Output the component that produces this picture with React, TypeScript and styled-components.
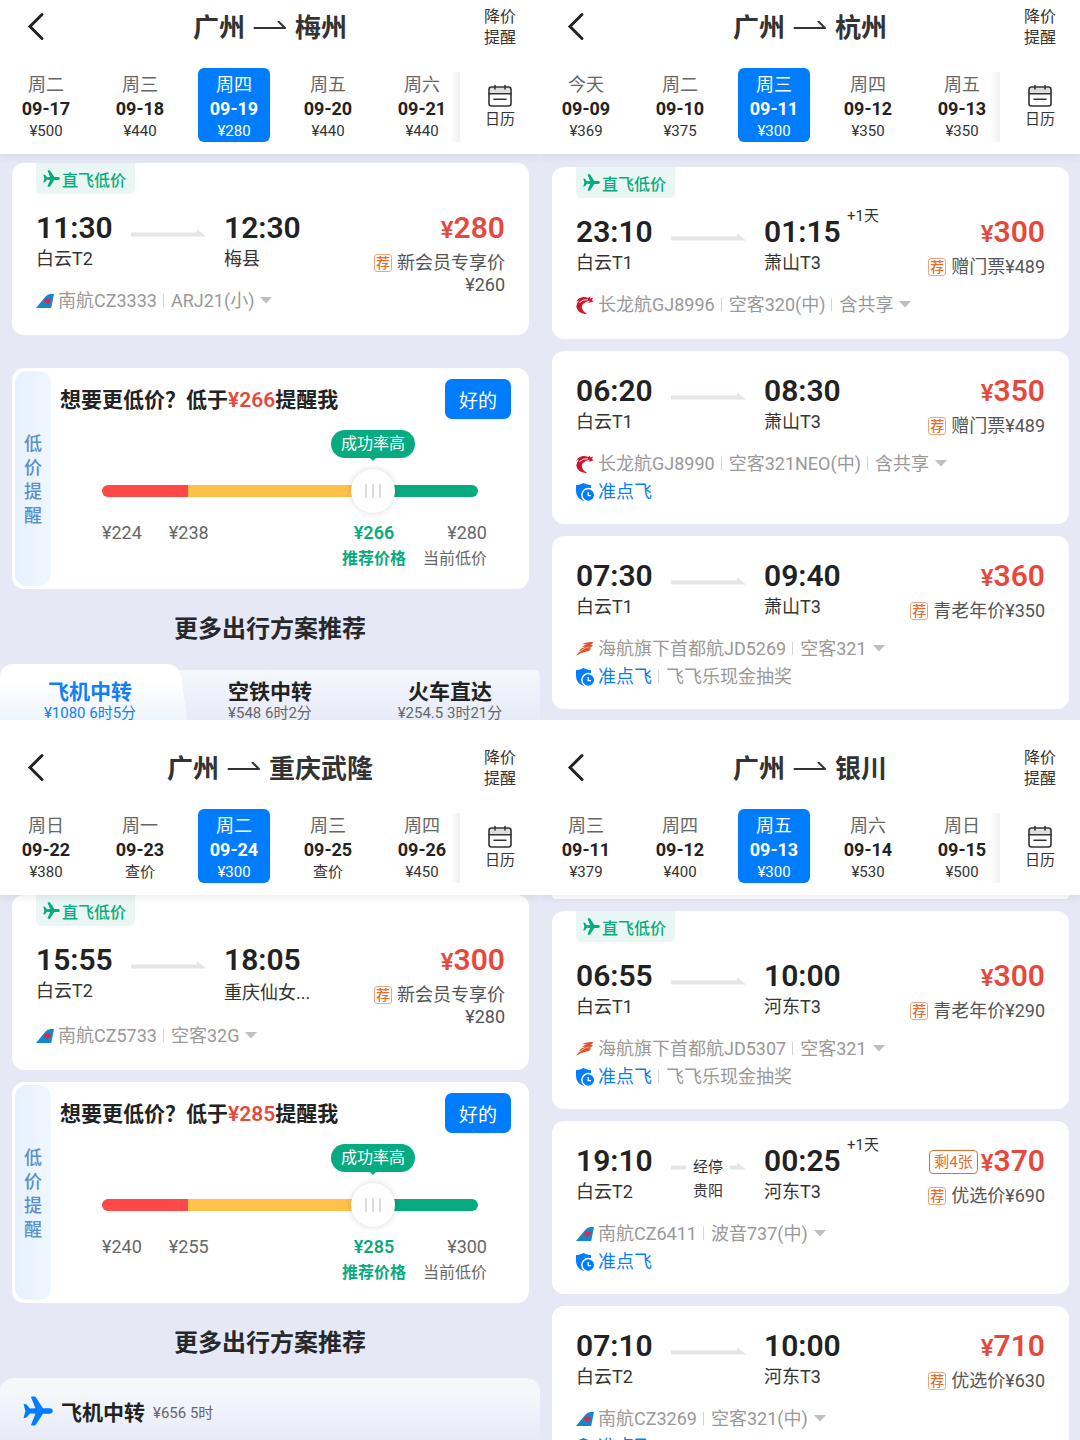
import React, { useState } from "react";
import styled, { createGlobalStyle, css } from "styled-components";

/* ---------- data ---------- */

type Carrier = "southern" | "loong" | "capital";

interface Day {
  week: string;
  date: string;
  price: string;
}

interface Flight {
  direct?: boolean;
  depart: string;
  from: string;
  arrive: string;
  to: string;
  longName?: boolean;
  nextDay?: boolean;
  via?: string;
  left?: string;
  price: string;
  offer: string;
  offerPrice: string;
  offerWraps?: boolean;
  carrier: Carrier;
  details: string[];
  services?: string[];
}

interface Alert {
  min: number;
  low: number;
  target: number;
  current: number;
}

const days = (rows: string[]): Day[] =>
  rows.map((row) => {
    const [week, date, price] = row.split(" ");
    return { week, date, price };
  });

/* ---------- base ---------- */

const BLUE = "#007dff";
const GREEN = "#07ab7f";
const RED = "#e6493c";
const ORANGE = "#e0702f";

const GlobalStyle = createGlobalStyle`
  *, *::before, *::after { box-sizing: border-box; }
  body {
    margin: 0;
    background: #e6e9f5;
    color: #222;
    font-family: Roboto, "Noto Sans CJK SC", sans-serif;
  }
  button {
    margin: 0;
    padding: 0;
    border: 0;
    background: none;
    color: inherit;
    font: inherit;
    cursor: pointer;
  }
  h1, h2, h3, p { margin: 0; }
  svg { display: block; flex: none; }
`;

const Board = styled.main`
  display: grid;
  grid-template-columns: 1fr 1fr;
  grid-template-rows: 1fr 1fr;
  height: 100vh;
  overflow: hidden;
`;

const Panel = styled.section`
  display: flex;
  flex-direction: column;
  min-width: 0;
  min-height: 0;
  overflow: hidden;
  background: #e6e9f5;
`;

/* ---------- header ---------- */

const Header = styled.header<{ $statusGap?: boolean }>`
  position: relative;
  z-index: 1;
  flex: none;
  padding-top: ${(p) => (p.$statusGap ? 21 : 0)}px;
  padding-bottom: 12px;
  background: #fff;
  box-shadow: 0 2px 8px rgba(60, 60, 70, 0.1);
`;

const TitleRow = styled.div`
  display: grid;
  grid-template-columns: 80px 1fr 80px;
  align-items: center;
  height: 54px;
`;

const BackButton = styled.button`
  padding-left: 26px;
`;

const Title = styled.h1`
  display: flex;
  align-items: center;
  justify-content: center;
  gap: 8px;
  padding-top: 2px;
  color: #333;
  font-size: 26px;
  font-weight: 700;
  line-height: 36px;
  white-space: nowrap;
`;

const AlertLink = styled.button`
  color: #333;
  font-size: 16px;
  line-height: 21px;
`;

const DateRow = styled.div`
  display: flex;
  padding-top: 14px;
`;

const DateStrip = styled.div`
  position: relative;
  flex: 1;
  min-width: 0;
  overflow: hidden;

  &::after {
    content: "";
    position: absolute;
    top: 4px;
    right: 0;
    bottom: 0;
    width: 10px;
    background: linear-gradient(to right, rgba(240, 240, 240, 0), #f0f0f0);
  }
`;

const DateList = styled.div`
  display: flex;
  margin: 0 -9px 0 -1px;
`;

const DateSlot = styled.div`
  display: flex;
  flex: 1;
  justify-content: center;
`;

const DateButton = styled.button<{ $active: boolean }>`
  display: flex;
  flex-direction: column;
  align-items: center;
  width: 72px;
  padding-top: 5px;
  border-radius: 6px;
  color: #333;
  font-size: 15px;
  line-height: 21px;
  ${(p) =>
    p.$active &&
    css`
      background: ${BLUE};
      color: #fff;
    `}
`;

const Week = styled.span<{ $active: boolean }>`
  color: ${(p) => (p.$active ? "#fff" : "#666")};
  font-size: 18px;
  line-height: 24px;
`;

const DateText = styled.span<{ $active: boolean }>`
  color: ${(p) => (p.$active ? "#fff" : "#222")};
  font-size: 18px;
  font-weight: 700;
  line-height: 24px;
`;

const CalendarButton = styled.button`
  display: flex;
  flex-direction: column;
  align-items: center;
  gap: 3px;
  width: 80px;
  padding-top: 16px;
  color: #333;
  font-size: 15px;
  line-height: 18px;
`;

/* ---------- flight card ---------- */

const List = styled.div<{ $top: number; $gap: number }>`
  display: flex;
  flex: none;
  flex-direction: column;
  gap: ${(p) => p.$gap}px;
  padding: ${(p) => p.$top}px 11px 0 12px;
`;

const Card = styled.article<{ $services: boolean }>`
  border-radius: 12px;
  padding: 0 24px ${(p) => (p.$services ? 18 : 20)}px;
  background: #fff;
`;

const CardTail = styled.div`
  height: 4px;
  border-radius: 0 0 12px 12px;
  background: #fff;
`;

const DirectBadge = styled.div`
  display: inline-flex;
  align-items: center;
  gap: 2px;
  height: 31px;
  padding: 0 9px 0 7px;
  border-radius: 0 0 6px 6px;
  background: #e9f6f3;
  color: ${GREEN};
  font-size: 16px;
  font-weight: 500;
  vertical-align: top;
`;

const CardMain = styled.div<{ $badge: boolean }>`
  display: flex;
  justify-content: space-between;
  padding-top: ${(p) => (p.$badge ? 16 : 22)}px;
`;

const Trip = styled.div`
  min-width: 0;
`;

const Route = styled.div`
  display: flex;
  gap: 18px;
`;

const Stop = styled.div`
  position: relative;
  width: 76px;
`;

const Time = styled.div`
  color: #222;
  font-size: 30px;
  font-weight: 600;
  line-height: 36px;
`;

const NextDay = styled.sup`
  position: absolute;
  top: -7px;
  left: 83px;
  color: #333;
  font-size: 15px;
  line-height: 18px;
  white-space: nowrap;
`;

const Airport = styled.div<{ $long?: boolean }>`
  color: #333;
  font-size: 18px;
  line-height: ${(p) => (p.$long ? 29 : 26)}px;
  white-space: nowrap;
`;

const Path = styled.div`
  width: 76px;
  padding-top: 19px;
`;

const ViaPath = styled.div`
  display: grid;
  grid-template-columns: 16px 1fr 16px;
  width: 76px;
  padding-top: 12px;
  color: #333;
  font-size: 15px;
  line-height: 24px;
  text-align: center;

  svg { margin-top: 7px; }
`;

const Meta = styled.div<{ $first?: boolean }>`
  display: flex;
  align-items: center;
  height: 28px;
  margin-top: ${(p) => (p.$first ? 15 : 0)}px;
  color: #999;
  font-size: 18px;
  line-height: 28px;
  white-space: nowrap;

  svg:first-child { margin-right: 4px; }
`;

const MetaPart = styled.span`
  & + &::before {
    content: "";
    display: inline-block;
    width: 1px;
    height: 13px;
    margin: 0 7px 0 6px;
    background: #d4d4d4;
  }
`;

const Punctual = styled(MetaPart)`
  color: #0a80f5;
`;

const Caret = styled.button`
  margin-left: 6px;
`;

const PriceColumn = styled.div`
  display: flex;
  flex: none;
  flex-direction: column;
  align-items: flex-end;
`;

const PriceRow = styled.div`
  display: flex;
  align-items: center;
  gap: 3px;
`;

const SeatsLeft = styled.span`
  padding: 0 4px;
  border: 1px solid ${ORANGE};
  border-radius: 4px;
  color: ${ORANGE};
  font-size: 15px;
  line-height: 22px;
`;

const Price = styled.strong`
  color: ${RED};
  font-size: 30px;
  font-weight: 600;
  line-height: 36px;

  small { font-size: 24px; }
`;

const Offer = styled.p`
  display: flex;
  align-items: flex-start;
  gap: 5px;
  margin-top: 4px;
  color: #555;
  font-size: 18px;
  line-height: 22px;
  text-align: right;
  white-space: nowrap;
`;

const OfferTag = styled.span`
  width: 18px;
  height: 18px;
  margin-top: 2px;
  border: 1px solid #efa57c;
  border-radius: 3px;
  color: ${ORANGE};
  font-size: 14px;
  font-weight: 500;
  line-height: 16px;
  text-align: center;
`;

/* ---------- price alert ---------- */

const AlertCard = styled.form`
  display: flex;
  padding: 3px;
  border-radius: 12px;
  background: #fff;
`;

const AlertSide = styled.div`
  display: flex;
  align-items: center;
  justify-content: center;
  flex: none;
  width: 36px;
  border-radius: 12px;
  background: linear-gradient(to right, #e6f1fd, #f0f7fe);
  color: #5a90ca;
  font-size: 18px;
  font-weight: 500;
  line-height: 24px;
  text-align: center;

  span { width: 18px; padding-top: 2px; }
`;

const AlertBody = styled.div`
  flex: 1;
  min-width: 0;
  padding: 8px 15px 14px 9px;
`;

const AlertHead = styled.div`
  display: flex;
  align-items: center;
  justify-content: space-between;
`;

const AlertTitle = styled.label`
  padding-top: 2px;
  color: #222;
  font-size: 21px;
  font-weight: 700;
  line-height: 38px;
  white-space: nowrap;

  em { color: ${RED}; font-style: normal; font-weight: 600; }
`;

const ConfirmButton = styled.button`
  width: 66px;
  height: 40px;
  border-radius: 7px;
  background: ${BLUE};
  color: #fff;
  font-size: 19px;
`;

const SliderBox = styled.div`
  position: relative;
  margin: 50px 33px 0 42px;
`;

const Bubble = styled.output`
  position: absolute;
  bottom: 55px;
  padding: 0 10px;
  border-radius: 14px;
  background: ${GREEN};
  color: #fff;
  font-size: 16px;
  line-height: 28px;
  white-space: nowrap;
  transform: translateX(-50%);

  &::after {
    content: "";
    position: absolute;
    top: 27px;
    left: 50%;
    border: 4px solid transparent;
    border-top-color: ${GREEN};
    transform: translateX(-50%);
  }
`;

const Slider = styled.input`
  display: block;
  width: 100%;
  height: 44px;
  margin: 0;
  appearance: none;
  background: transparent;

  &::-webkit-slider-runnable-track {
    height: 12px;
    border-radius: 6px;
    background: linear-gradient(to right, #ff4848 23%, #ffc147 23% 72%, ${GREEN} 72%);
  }
  &::-webkit-slider-thumb {
    appearance: none;
    width: 44px;
    height: 44px;
    margin-top: -16px;
    border-radius: 50%;
    background:
      linear-gradient(#dcdcdc, #dcdcdc) 14px 50% / 2px 14px no-repeat,
      linear-gradient(#dcdcdc, #dcdcdc) 21px 50% / 2px 14px no-repeat,
      linear-gradient(#dcdcdc, #dcdcdc) 28px 50% / 2px 14px no-repeat,
      #fff;
    box-shadow: 0 0 6px rgba(0, 0, 0, 0.16);
  }
`;

const Scale = styled.div`
  display: flex;
  gap: 27px;
  margin: 7px 24px 0 42px;
  color: #666;
  font-size: 18px;
  line-height: 26px;
`;

const ScaleEnd = styled.div`
  display: flex;
  gap: 17px;
  margin-left: auto;
`;

const Mark = styled.div<{ $target?: boolean }>`
  text-align: ${(p) => (p.$target ? "center" : "right")};
  ${(p) => p.$target && css`color: ${GREEN}; font-weight: 600;`}
  span { display: block; }
  span + span { font-size: 16px; }
`;

/* ---------- more options ---------- */

const MoreTitle = styled.h2`
  flex: none;
  margin: 22px 0 17px;
  color: #26282b;
  font-size: 24px;
  font-weight: 700;
  line-height: 36px;
  text-align: center;
`;

const Tabs = styled.div`
  display: grid;
  grid-template-columns: repeat(3, 1fr);
  flex: none;
  background: linear-gradient(#f5f7fc, #e6eaf7 54px) 0 6px no-repeat;
  border-radius: 14px 14px 0 0;
`;

const TabBack = styled.svg`
  position: absolute;
  top: 0;
  left: 0;
  width: 104%;
  height: 100%;
`;

const Tab = styled.button<{ $active?: boolean }>`
  position: relative;
  display: flex;
  flex-direction: column;
  align-items: center;
  padding-top: 15px;
  color: ${(p) => (p.$active ? "#1180f7" : "#666")};
  font-size: 15px;
  line-height: 14px;

  strong {
    position: relative;
    color: ${(p) => (p.$active ? "#1180f7" : "#222")};
    font-size: 21px;
    font-weight: 700;
    line-height: 27px;
  }
  span { position: relative; }
`;

const Collapsed = styled.button`
  display: flex;
  align-items: center;
  flex: none;
  gap: 8px;
  height: 66px;
  padding-left: 23px;
  border-radius: 14px 14px 0 0;
  background: linear-gradient(#f5f7fb 25%, #e7ebf7 90%);
  color: #666;
  font-size: 15px;

  strong { color: #222; font-size: 21px; font-weight: 700; }
`;

/* ---------- icons ---------- */

const BackIcon = () => (
  <svg width="20" height="30" viewBox="0 0 20 30" fill="none" stroke="#222" strokeWidth="3">
    <path d="M16 2.500 4 14.500 16 26.500" strokeLinecap="round" strokeLinejoin="miter" />
  </svg>
);

const TitleArrow = () => (
  <svg width="34" height="14" viewBox="0 0 34 14" fill="none" stroke="#333" strokeWidth="2">
    <path d="M1.500 7H32L25.500 0.500" strokeLinecap="round" strokeLinejoin="round" />
  </svg>
);

const CalendarIcon = () => (
  <svg width="24" height="23" viewBox="0 0 24 23" fill="none" stroke="#333" strokeWidth="1.600">
    <path d="M1.500 3.500h21v6h-21z" fill="#dedee0" stroke="none" />
    <rect x="1" y="3" width="22" height="19" rx="2.500" />
    <path d="M1 9.700h22M6 15.200h12M7 1.500v3.500M17 1.500v3.500" strokeLinecap="round" />
  </svg>
);

const PlaneIcon = ({ size, color }: { size: number; color: string }) => (
  <svg width={size} height={size} viewBox="0 0 30 30" fill={color}>
    <path d="M.5 7.800 3.500 8.500 7 12.600 12.500 12.300 8 1.200Q8 .5 9 .5H11.500Q12.200 .5 12.800 1.200L20 12.300H27Q29.800 12.700 29.800 15T27 17.700H20L12.800 28.800Q12.200 29.500 11.500 29.500H9Q8 29.500 8 28.800L12.500 17.700 7 17.400 3.500 21.500 .5 22.200 2.400 15Z" />
  </svg>
);

const PathArrow = () => (
  <svg width="76" height="8" viewBox="0 0 76 8" fill="#e3e6e7">
    <path d="M1 3.500H67V.3L76 7.500H1Z" />
  </svg>
);

const PathStart = () => (
  <svg width="16" height="8" viewBox="0 0 16 8" fill="#e3e6e7">
    <path d="M1 3.500H16V7.500H1Z" />
  </svg>
);

const PathEnd = () => (
  <svg width="16" height="8" viewBox="0 0 16 8" fill="#e3e6e7">
    <path d="M0 3.500H7V.3L16 7.500H0Z" />
  </svg>
);

const CaretIcon = () => (
  <svg width="12" height="9" viewBox="0 0 12 9" fill="#bfbfbf">
    <path d="M0 0H12L6 6.500Z" />
  </svg>
);

const PunctualIcon = () => (
  <svg width="18" height="18" viewBox="0 0 18 18">
    <path d="M7.500 0Q11 2 15 2.300V8Q15 15 7.500 18 0 15 0 8V2.300Q4 2 7.500 0Z" fill="#007dff" />
    <circle cx="12.300" cy="12" r="7.200" fill="#fff" />
    <circle cx="12.300" cy="12" r="5.700" fill="#007dff" />
    <path d="M12.200 9V12.600H15" fill="none" stroke="#fff" strokeWidth="1.300" />
  </svg>
);

const CarrierLogo = ({ carrier }: { carrier: Carrier }) => {
  if (carrier === "southern") {
    return (
      <svg width="18" height="18" viewBox="0 0 18 18">
        <path d="M0 16 9.500 4.500Q11.500 2 14.500 2H18L15.200 16Z" fill="#1588c9" />
        <path d="M7.800 8.200 9.800 6.500 11.300 7.500 12.500 6 14.800 7.200 14.500 10 12.500 11 11.500 14 10.500 10.800 8.600 10.800Z" fill="#e0284a" />
        <path d="M10 9H13M11.500 8V12" stroke="#7a4f8e" strokeWidth=".7" />
      </svg>
    );
  }
  if (carrier === "loong") {
    return (
      <svg width="18" height="18" viewBox="0 0 18 18" fill="#d0142b">
        <path d="M9.500 18Q2 17 .5 11.500 -.2 8 3 4.500 .8 5 .3 6.500 1.200 2 6 1.200 9 .5 12 2L14.500 .5 14 2.500 17.500 1.500 15.500 4 18 5 14.500 6.500 10.500 6.300Q5 8 6 12 6.800 15.800 11 17.500Z" />
        <path d="M3.500 6.500Q7 3 12 3.800M9 6.800 13.500 5.200" fill="none" stroke="#fff" strokeWidth=".9" />
      </svg>
    );
  }
  return (
    <svg width="18" height="18" viewBox="0 0 18 18" fill="#dc5430">
      <path d="M5.500 4.500Q11 1 17.500 2.300 16.500 4 14.500 5 16.500 5 17 5.500 15.500 7.200 13 8.200 15 8.200 15.500 8.800 13.500 11.500 9 12 4.500 12.500 0 16 1.500 12.500 5.500 10.500 3.500 10.500 2.500 11.200 5 8 9 7 7 6.500 5 7.500 8 5 11 4.700 8.500 4 5.500 4.500Z" />
      <path d="M5 10.500Q9 7.800 13 6.800" fill="none" stroke="#fff" strokeWidth=".5" />
    </svg>
  );
};

/* ---------- parts ---------- */

interface TopProps {
  from: string;
  to: string;
  dates: Day[];
  statusGap?: boolean;
}

function Top({ from, to, dates, statusGap }: TopProps) {
  const [active, setActive] = useState(2);
  return (
    <Header $statusGap={statusGap}>
      <TitleRow>
        <BackButton aria-label="返回"><BackIcon /></BackButton>
        <Title>
          <span>{from}</span>
          <TitleArrow />
          <span>{to}</span>
        </Title>
        <AlertLink>降价<br />提醒</AlertLink>
      </TitleRow>
      <DateRow>
        <DateStrip>
          <DateList>
            {dates.map((day, i) => (
              <DateSlot key={day.date}>
                <DateButton $active={i === active} onClick={() => setActive(i)}>
                  <Week $active={i === active}>{day.week}</Week>
                  <DateText $active={i === active}>{day.date}</DateText>
                  <span>{day.price}</span>
                </DateButton>
              </DateSlot>
            ))}
          </DateList>
        </DateStrip>
        <CalendarButton>
          <CalendarIcon />
          <span>日历</span>
        </CalendarButton>
      </DateRow>
    </Header>
  );
}

function FlightCard({ flight: f }: { flight: Flight }) {
  return (
    <Card $services={!!f.services}>
      {f.direct && (
        <DirectBadge>
          <PlaneIcon size={17} color={GREEN} />
          <span>直飞低价</span>
        </DirectBadge>
      )}
      <CardMain $badge={!!f.direct}>
        <Trip>
          <Route>
            <Stop>
              <Time>{f.depart}</Time>
              <Airport>{f.from}</Airport>
            </Stop>
            {f.via ? (
              <ViaPath>
                <PathStart />
                <span>经停<br />{f.via}</span>
                <PathEnd />
              </ViaPath>
            ) : (
              <Path><PathArrow /></Path>
            )}
            <Stop>
              <Time>{f.arrive}</Time>
              {f.nextDay && <NextDay>+1天</NextDay>}
              <Airport $long={f.longName}>{f.to}</Airport>
            </Stop>
          </Route>
          <Meta $first>
            <CarrierLogo carrier={f.carrier} />
            {f.details.map((d) => <MetaPart key={d}>{d}</MetaPart>)}
            <Caret aria-label="展开"><CaretIcon /></Caret>
          </Meta>
          {f.services && (
            <Meta>
              <PunctualIcon />
              {f.services.map((s, i) =>
                i === 0 ? <Punctual key={s}>{s}</Punctual> : <MetaPart key={s}>{s}</MetaPart>
              )}
            </Meta>
          )}
        </Trip>
        <PriceColumn>
          <PriceRow>
            {f.left && <SeatsLeft>{f.left}</SeatsLeft>}
            <Price><small>¥</small>{f.price}</Price>
          </PriceRow>
          <Offer>
            <OfferTag>荐</OfferTag>
            <span>{f.offer}{f.offerWraps && <br />}{f.offerPrice}</span>
          </Offer>
        </PriceColumn>
      </CardMain>
    </Card>
  );
}

function PriceAlert({ id, alert }: { id: string; alert: Alert }) {
  const [value, setValue] = useState(alert.target);
  const ratio = (value - alert.min) / (alert.current - alert.min);
  return (
    <AlertCard onSubmit={(e) => e.preventDefault()}>
      <AlertSide><span>低价提醒</span></AlertSide>
      <AlertBody>
        <AlertHead>
          <AlertTitle htmlFor={id}>想要更低价？低于<em>¥{value}</em>提醒我</AlertTitle>
          <ConfirmButton type="submit">好的</ConfirmButton>
        </AlertHead>
        <SliderBox>
          <Bubble htmlFor={id} style={{ left: `calc(22px + (100% - 44px) * ${ratio})` }}>成功率高</Bubble>
          <Slider
            id={id}
            type="range"
            min={alert.min}
            max={alert.current}
            value={value}
            onChange={(e) => setValue(Number(e.target.value))}
          />
        </SliderBox>
        <Scale>
          <span>¥{alert.min}</span>
          <span>¥{alert.low}</span>
          <ScaleEnd>
            <Mark $target><span>¥{alert.target}</span><span>推荐价格</span></Mark>
            <Mark><span>¥{alert.current}</span><span>当前低价</span></Mark>
          </ScaleEnd>
        </Scale>
      </AlertBody>
    </AlertCard>
  );
}

/* ---------- page ---------- */

const meizhou: Flight = {
  direct: true, depart: "11:30", from: "白云T2", arrive: "12:30", to: "梅县", price: "280",
  offer: "新会员专享价", offerPrice: "¥260", offerWraps: true,
  carrier: "southern", details: ["南航CZ3333", "ARJ21(小)"],
};

const wulong: Flight = {
  direct: true, depart: "15:55", from: "白云T2", arrive: "18:05", to: "重庆仙女...", longName: true, price: "300",
  offer: "新会员专享价", offerPrice: "¥280", offerWraps: true,
  carrier: "southern", details: ["南航CZ5733", "空客32G"],
};

const hangzhou: Flight[] = [
  {
    direct: true, depart: "23:10", from: "白云T1", arrive: "01:15", to: "萧山T3", nextDay: true, price: "300",
    offer: "赠门票", offerPrice: "¥489", carrier: "loong", details: ["长龙航GJ8996", "空客320(中)", "含共享"],
  },
  {
    depart: "06:20", from: "白云T1", arrive: "08:30", to: "萧山T3", price: "350",
    offer: "赠门票", offerPrice: "¥489", carrier: "loong", details: ["长龙航GJ8990", "空客321NEO(中)", "含共享"],
    services: ["准点飞"],
  },
  {
    depart: "07:30", from: "白云T1", arrive: "09:40", to: "萧山T3", price: "360",
    offer: "青老年价", offerPrice: "¥350", carrier: "capital", details: ["海航旗下首都航JD5269", "空客321"],
    services: ["准点飞", "飞飞乐现金抽奖"],
  },
];

const yinchuan: Flight[] = [
  {
    direct: true, depart: "06:55", from: "白云T1", arrive: "10:00", to: "河东T3", price: "300",
    offer: "青老年价", offerPrice: "¥290", carrier: "capital", details: ["海航旗下首都航JD5307", "空客321"],
    services: ["准点飞", "飞飞乐现金抽奖"],
  },
  {
    depart: "19:10", from: "白云T2", arrive: "00:25", to: "河东T3", nextDay: true, via: "贵阳", left: "剩4张", price: "370",
    offer: "优选价", offerPrice: "¥690", carrier: "southern", details: ["南航CZ6411", "波音737(中)"],
    services: ["准点飞"],
  },
  {
    depart: "07:10", from: "白云T2", arrive: "10:00", to: "河东T3", price: "710",
    offer: "优选价", offerPrice: "¥630", carrier: "southern", details: ["南航CZ3269", "空客321(中)"],
    services: ["准点飞"],
  },
];

export default function App() {
  return (
    <>
      <GlobalStyle />
      <Board>
        <Panel>
          <Top
            from="广州"
            to="梅州"
            dates={days(["周二 09-17 ¥500", "周三 09-18 ¥440", "周四 09-19 ¥280", "周五 09-20 ¥440", "周六 09-21 ¥440"])}
          />
          <List $top={9} $gap={33}>
            <FlightCard flight={meizhou} />
            <PriceAlert id="alert-meizhou" alert={{ min: 224, low: 238, target: 266, current: 280 }} />
          </List>
          <MoreTitle>更多出行方案推荐</MoreTitle>
          <Tabs>
            <Tab $active>
              <TabBack viewBox="0 0 187 56" preserveAspectRatio="none">
                <defs>
                  <linearGradient id="tab-fill" x1="0" y1="0" x2="0" y2="1">
                    <stop offset=".3" stopColor="#fff" />
                    <stop offset="1" stopColor="#eff5fd" />
                  </linearGradient>
                </defs>
                <path d="M0 56V14Q0 0 14 0H166Q178 0 181 12L187 56Z" fill="url(#tab-fill)" />
              </TabBack>
              <strong>飞机中转</strong>
              <span>¥1080 6时5分</span>
            </Tab>
            <Tab>
              <strong>空铁中转</strong>
              <span>¥548 6时2分</span>
            </Tab>
            <Tab>
              <strong>火车直达</strong>
              <span>¥254.5 3时21分</span>
            </Tab>
          </Tabs>
        </Panel>

        <Panel>
          <Top
            from="广州"
            to="杭州"
            dates={days(["今天 09-09 ¥369", "周二 09-10 ¥375", "周三 09-11 ¥300", "周四 09-12 ¥350", "周五 09-13 ¥350"])}
          />
          <List $top={13} $gap={12}>
            {hangzhou.map((f) => <FlightCard key={f.depart} flight={f} />)}
          </List>
        </Panel>

        <Panel>
          <Top
            statusGap
            from="广州"
            to="重庆武隆"
            dates={days(["周日 09-22 ¥380", "周一 09-23 查价", "周二 09-24 ¥300", "周三 09-25 查价", "周四 09-26 ¥450"])}
          />
          <List $top={0} $gap={12}>
            <FlightCard flight={wulong} />
            <PriceAlert id="alert-wulong" alert={{ min: 240, low: 255, target: 285, current: 300 }} />
          </List>
          <MoreTitle>更多出行方案推荐</MoreTitle>
          <Collapsed>
            <PlaneIcon size={30} color={BLUE} />
            <strong>飞机中转</strong>
            <span>¥656 5时</span>
          </Collapsed>
        </Panel>

        <Panel>
          <Top
            statusGap
            from="广州"
            to="银川"
            dates={days(["周三 09-11 ¥379", "周四 09-12 ¥400", "周五 09-13 ¥300", "周六 09-14 ¥530", "周日 09-15 ¥500"])}
          />
          <List $top={0} $gap={12}>
            <CardTail />
            {yinchuan.map((f) => <FlightCard key={f.depart} flight={f} />)}
          </List>
        </Panel>
      </Board>
    </>
  );
}
